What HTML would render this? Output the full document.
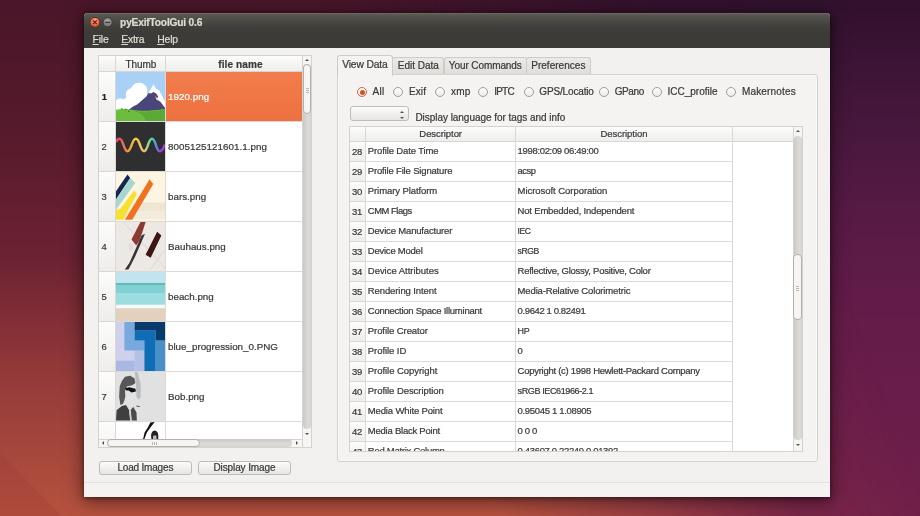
<!DOCTYPE html>
<html><head><meta charset="utf-8"><title>pyExifToolGui 0.6</title>
<style>
*{box-sizing:border-box;margin:0;padding:0}
html,body{width:920px;height:516px;overflow:hidden}
body{position:relative;font-family:"Liberation Sans",sans-serif;font-size:10px;color:#3a3a3a;background:#4a1a3a}
#root{position:absolute;left:0;top:0;width:920px;height:516px;will-change:transform}
.abs,.t{position:absolute}
.t{white-space:pre;line-height:12px;-webkit-text-stroke:.22px}
#bgc{position:absolute;left:0;top:0;width:920px;height:516px;background:linear-gradient(180deg,#31112d 0,#43163a 20%,#561a44 40%,#631c49 60%,#6a1d4a 80%,#701f49 100%)}
#bgw{position:absolute;left:0;top:0;width:920px;height:516px;background:linear-gradient(180deg,#4a1629 0,#561a2c 25%,#6c2232 50%,#963b3a 74%,#b5523e 100%);
 -webkit-mask-image:linear-gradient(70deg,#000 0,#000 45%,rgba(0,0,0,.6) 59%,rgba(0,0,0,.15) 72%,transparent 84%);mask-image:linear-gradient(70deg,#000 0,#000 45%,rgba(0,0,0,.6) 59%,rgba(0,0,0,.15) 72%,transparent 84%)}
#win{background:#f2f1f0;border-radius:4px 4px 0 0;box-shadow:0 3px 18px 1px rgba(0,0,0,.5),0 1px 4px rgba(0,0,0,.45)}
#title{border-radius:4px 4px 0 0;background:linear-gradient(#5c5a53 0,#4b4943 8px,#3f3e3a 15px,#3c3b37 20px,#3c3b37 100%);box-shadow:inset 0 1px 0 #6b6961}
.tbl{background:#fff;border:1px solid #d4d2ce;overflow:hidden}
.hd{background:linear-gradient(#fcfcfc,#eeeeec);border-right:1px solid #dad8d5;border-bottom:1px solid #d8d6d3}
.rn{background:linear-gradient(#fcfcfb,#eeedeb);border-right:1px solid #dad8d5;border-bottom:1px solid #dad8d5}
.cell{border-right:1px solid #dcdad7;border-bottom:1px solid #dcdad7;background:#fff}
.btn{border:1px solid #bfbcb7;border-radius:3px;background:linear-gradient(#fbfbfa,#e6e5e2)}
.tab{border:1px solid #cfccc8;border-bottom:none;border-radius:3px 3px 0 0;background:linear-gradient(#eceae7,#e0deda)}
.radio{border-radius:50%;border:1px solid #a09d97;background:linear-gradient(#fff,#ecebe8)}
.sb{background:#dbd9d5}
.th{background:#f6f5f4;border:1px solid #b3b1ac;border-radius:4px}
</style></head><body>
<div id="root"><div id="bgc"></div><div id="bgw"></div>
<svg class="abs" style="left:0;top:440px" width="80" height="76" viewBox="0 440 80 76"><path d="M0 453L62 516H0Z" fill="#9c3a36" fill-opacity=".28"/></svg>
<div class="abs" id="win" style="left:84px;top:13px;width:746px;height:484px"></div>
<div class="abs title" id="title" style="left:84.00px;top:13.00px;width:746.00px;height:35.00px;"></div>
<svg class="abs" style="left:86px;top:14px" width="32" height="18" viewBox="86 14 32 18">
<defs><radialGradient id="gc" cx=".5" cy=".3" r=".7"><stop offset="0" stop-color="#f8a58c"/><stop offset=".6" stop-color="#ef6d50"/><stop offset="1" stop-color="#e0553a"/></radialGradient>
<radialGradient id="gm" cx=".5" cy=".3" r=".7"><stop offset="0" stop-color="#a9a8a2"/><stop offset=".6" stop-color="#85847e"/><stop offset="1" stop-color="#74736d"/></radialGradient></defs>
<circle cx="94.9" cy="22.3" r="4.9" fill="url(#gc)" stroke="#5e2a1c" stroke-width="1"/>
<path d="M93 20.4L96.8 24.2M96.8 20.4L93 24.2" stroke="#5a2410" stroke-width="1.2"/>
<circle cx="107.6" cy="22.3" r="4.6" fill="url(#gm)" stroke="#3a3935" stroke-width="1"/>
<path d="M105.2 22.4H110" stroke="#3c3b37" stroke-width="1.3"/></svg>
<div class="t" style="left:120.10px;top:16.50px;font-size:10.2px;font-weight:700;color:#dfdbd2;letter-spacing:-0.187px;">pyExifToolGui 0.6</div>
<div class="t" style="left:92.50px;top:33.50px;font-size:10.4px;color:#dfdbd2;letter-spacing:-0.183px;"><u>F</u>ile</div>
<div class="t" style="left:121.20px;top:33.50px;font-size:10.4px;color:#dfdbd2;letter-spacing:-0.216px;"><u>E</u>xtra</div>
<div class="t" style="left:157.20px;top:33.50px;font-size:10.4px;color:#dfdbd2;letter-spacing:-0.158px;"><u>H</u>elp</div>
<div class="abs " style="left:84.00px;top:482.00px;width:746.00px;height:15.00px;background:#f4f3f2;border-top:1px solid #e3e1de"></div>
<div class="abs tbl" style="left:98px;top:55px;width:214px;height:393px">
<div class="abs hd" style="left:0.00px;top:0.00px;width:17.00px;height:16.00px;"></div>
<div class="abs hd" style="left:17.00px;top:0.00px;width:50.00px;height:16.00px;"></div>
<div class="abs hd" style="left:67.00px;top:0.00px;width:137.00px;height:16.00px;"></div>
<div class="t" style="left:26.40px;top:2.50px;font-size:10px;letter-spacing:-0.031px;">Thumb</div>
<div class="t" style="left:119.30px;top:2.50px;font-size:10px;font-weight:700;letter-spacing:0.105px;">file name</div>
<div class="abs rn" style="left:0.00px;top:16.00px;width:17.00px;height:50.00px;"></div>
<div class="t" style="left:2.70px;top:34.50px;font-size:9.4px;font-weight:700;color:#222;">1</div>
<div class="abs cell" style="left:17.00px;top:16.00px;width:50.00px;height:50.00px;"></div>
<div class="abs" style="left:17px;top:16px;width:49px;height:49px;overflow:hidden"><svg width="49" height="49" viewBox="0 0 50 50" preserveAspectRatio="none" style="display:block"><rect width="50" height="50" fill="#a9d1f6"/>
<ellipse cx="23.5" cy="19" rx="8.5" ry="8" fill="#fff"/><ellipse cx="16" cy="23" rx="6" ry="6.5" fill="#fff"/><ellipse cx="14" cy="31" rx="7" ry="6" fill="#fff"/><rect x="12" y="22" width="20" height="16" fill="#fff"/>
<ellipse cx="4.5" cy="32" rx="5.5" ry="5" fill="#fff"/><rect x="0" y="33" width="16" height="6" fill="#fff"/>
<path d="M29 28 L38.3 12.5 L41 17 L44 18.5 L50 30 L50 40 L29 40Z" fill="#fff"/>
<path d="M11 40 L17 35.5 L22 33 L28 27.5 L31 25 L33 21.5 L36 22 L38 20.5 L41 22 L43 25 L42 27 L45 30 L50 36.5 L50 42 L11 42Z" fill="#4a4679"/>
<path d="M40 24 L42 27 L44 26 L45 30 L43 29 L41 28Z" fill="#fff" opacity=".85"/>
<path d="M0 38.5 Q8 37 16 38.5 Q28 41 50 37.5 L50 50 L0 50Z" fill="#6cbc3d"/>
<path d="M18 39.5 Q32 42 50 38 L50 50 L30 50 Q30 43 18 39.5Z" fill="#5aab35"/>
<path d="M5 38 L6 36.5 L7 38Z M9 38.5 L10 37 L11 38.5Z M12 40.5 L13 39 L14 40.5Z" fill="#2f6b2a"/></svg></div>
<div class="abs cell" style="left:67.00px;top:16.00px;width:137.00px;height:50.00px;background:linear-gradient(#f27d4c,#ee7040);"></div>
<div class="t" style="left:69.00px;top:34.50px;font-size:9.8px;color:#fff;letter-spacing:0.046px;">1920.png</div>
<div class="abs rn" style="left:0.00px;top:66.00px;width:17.00px;height:50.00px;"></div>
<div class="t" style="left:2.40px;top:84.50px;font-size:9.4px;">2</div>
<div class="abs cell" style="left:17.00px;top:66.00px;width:50.00px;height:50.00px;"></div>
<div class="abs" style="left:17px;top:66px;width:49px;height:49px;overflow:hidden"><svg width="49" height="49" viewBox="0 0 50 50" preserveAspectRatio="none" style="display:block"><defs><linearGradient id="rb" gradientUnits="userSpaceOnUse" x1="0" x2="50" y1="0" y2="0">
<stop offset="0" stop-color="#e6455c"/><stop offset=".1" stop-color="#ea5a58"/><stop offset=".24" stop-color="#f09240"/><stop offset=".4" stop-color="#f2d23c"/><stop offset=".57" stop-color="#ecc070"/><stop offset=".66" stop-color="#9ad68a"/><stop offset=".75" stop-color="#45cdb0"/><stop offset=".84" stop-color="#6a7ad8"/><stop offset=".9" stop-color="#9442d2"/><stop offset="1" stop-color="#a040c8"/></linearGradient></defs>
<rect width="50" height="50" fill="#2f2e31"/>
<path d="M0 20.5 C1.5 17 2.5 17 3.5 17 C7.6 17 7.6 29.8 11.7 29.8 C16 29.8 16 17 20.3 17 C24.5 17 24.5 29.8 28.6 29.8 C32.7 29.8 32.7 17 36.8 17 C40.7 17 40.7 29.8 44.6 29.8 C47 29.8 48.5 27 50 23" fill="none" stroke="url(#rb)" stroke-width="2.5"/></svg></div>
<div class="abs cell" style="left:67.00px;top:66.00px;width:137.00px;height:50.00px;"></div>
<div class="t" style="left:69.00px;top:84.50px;font-size:9.8px;letter-spacing:0.046px;">8005125121601.1.png</div>
<div class="abs rn" style="left:0.00px;top:116.00px;width:17.00px;height:50.00px;"></div>
<div class="t" style="left:2.40px;top:134.50px;font-size:9.4px;">3</div>
<div class="abs cell" style="left:17.00px;top:116.00px;width:50.00px;height:50.00px;"></div>
<div class="abs" style="left:17px;top:116px;width:49px;height:49px;overflow:hidden"><svg width="49" height="49" viewBox="0 0 50 50" preserveAspectRatio="none" style="display:block"><rect width="50" height="50" fill="#fdf4e1"/><path d="M22 31 L50 31 L50 48 L4 48Z" fill="#eee6d3"/><rect x="14" y="40" width="36" height="8" fill="#f3ecdc"/>
<path d="M11.7 2.6 L14.5 6.2 L0 28 L0 19.6Z" fill="#14274e"/>
<path d="M14.5 6.2 L19.8 11 L0 38.5 L0 28Z" fill="#a9d5d0"/>
<path d="M18.8 18.5 L21.3 22.8 L7 48.8 L0 48.8 L0 38.5 L4 38Z" fill="#f8e12e"/>
<path d="M34.3 7.5 L38 12.2 L16.6 48.8 L9.2 48.8Z" fill="#f07220"/></svg></div>
<div class="abs cell" style="left:67.00px;top:116.00px;width:137.00px;height:50.00px;"></div>
<div class="t" style="left:69.00px;top:134.50px;font-size:9.8px;">bars.png</div>
<div class="abs rn" style="left:0.00px;top:166.00px;width:17.00px;height:50.00px;"></div>
<div class="t" style="left:2.40px;top:184.50px;font-size:9.4px;">4</div>
<div class="abs cell" style="left:17.00px;top:166.00px;width:50.00px;height:50.00px;"></div>
<div class="abs" style="left:17px;top:166px;width:49px;height:49px;overflow:hidden"><svg width="49" height="49" viewBox="0 0 50 50" preserveAspectRatio="none" style="display:block"><rect width="50" height="50" fill="#ece9e5"/>
<path d="M7.6 0 L47.7 44.6 L50 47 M50 28 L35 48.7" stroke="#d6cdc4" stroke-width="0.7" fill="none"/>
<path d="M25 0 L30.2 0 L27.1 9.7 L24 18.9 L20.6 24 L15.8 17.9 L21 7.6Z" fill="#8a3a30"/>
<path d="M12.3 23 L16.9 21 L17.9 28.2 L13.8 30.2Z" fill="#e8dcd8"/>
<path d="M26.1 13.8 L29.6 12.1 L20 34.3 L15.8 42.6 L12.7 48.5 L9 48.5 L13.8 41.5 L17.9 32.3Z" fill="#3a3236"/>
<path d="M42 10 L46.3 13.8 L35.4 36.4 L30.2 33.3Z" fill="#3d1512"/></svg></div>
<div class="abs cell" style="left:67.00px;top:166.00px;width:137.00px;height:50.00px;"></div>
<div class="t" style="left:69.00px;top:184.50px;font-size:9.8px;">Bauhaus.png</div>
<div class="abs rn" style="left:0.00px;top:216.00px;width:17.00px;height:50.00px;"></div>
<div class="t" style="left:2.40px;top:234.50px;font-size:9.4px;">5</div>
<div class="abs cell" style="left:17.00px;top:216.00px;width:50.00px;height:50.00px;"></div>
<div class="abs" style="left:17px;top:216px;width:49px;height:49px;overflow:hidden"><svg width="49" height="49" viewBox="0 0 50 50" preserveAspectRatio="none" style="display:block"><rect width="50" height="50" fill="#e3d0bd"/>
<rect width="50" height="11.5" fill="#c1e5ef"/><rect y="11.2" width="50" height="2.5" fill="#5fbaba"/><rect y="13.4" width="50" height="8.2" fill="#80d1d3"/>
<rect y="21.4" width="50" height="12.2" fill="#9edddf"/><rect y="33.4" width="50" height="3.6" fill="#f4fbfb"/></svg></div>
<div class="abs cell" style="left:67.00px;top:216.00px;width:137.00px;height:50.00px;"></div>
<div class="t" style="left:69.00px;top:234.50px;font-size:9.8px;">beach.png</div>
<div class="abs rn" style="left:0.00px;top:266.00px;width:17.00px;height:50.00px;"></div>
<div class="t" style="left:2.40px;top:284.50px;font-size:9.4px;">6</div>
<div class="abs cell" style="left:17.00px;top:266.00px;width:50.00px;height:50.00px;"></div>
<div class="abs" style="left:17px;top:266px;width:49px;height:49px;overflow:hidden"><svg width="49" height="49" viewBox="0 0 50 50" preserveAspectRatio="none" style="display:block"><rect width="50" height="50" fill="#cfd0ec"/>
<path d="M0 39.5 L19 39.5 L19 50 L0 50Z" fill="#a9b9e3"/><path d="M19 29 L29 29 L29 50 L19 50Z" fill="#b4c0e6"/>
<path d="M8.6 0 L19 0 L19 19 L29 19 L29 29 L8.6 29Z" fill="#78a8dc"/>
<path d="M19 8.6 L40.5 8.6 L40.5 50 L29 50 L29 19 L19 19Z" fill="#0f6db5"/>
<path d="M40.5 19 L50 19 L50 50 L40.5 50Z" fill="#4a90c8"/>
<path d="M19 0 L50 0 L50 19 L40.5 19 L40.5 8.6 L19 8.6Z" fill="#083a6b"/></svg></div>
<div class="abs cell" style="left:67.00px;top:266.00px;width:137.00px;height:50.00px;"></div>
<div class="t" style="left:69.00px;top:284.50px;font-size:9.8px;letter-spacing:-0.006px;">blue_progression_0.PNG</div>
<div class="abs rn" style="left:0.00px;top:316.00px;width:17.00px;height:50.00px;"></div>
<div class="t" style="left:2.40px;top:334.50px;font-size:9.4px;">7</div>
<div class="abs cell" style="left:17.00px;top:316.00px;width:50.00px;height:50.00px;"></div>
<div class="abs" style="left:17px;top:316px;width:49px;height:49px;overflow:hidden"><svg width="49" height="49" viewBox="0 0 50 50" preserveAspectRatio="none" style="display:block"><rect width="50" height="50" fill="#e1e1e1"/>
<path d="M6 9.2 L9.2 4.9 L14.5 3.8 L18.8 6.4 L19.8 11.3 L16.6 13.4 L11.3 14.5 L9.2 18.8 L9.5 25 L8.5 29 L7 32.6 L4.5 33.7 L3.2 25.2 L3.8 14.5Z" fill="#575757"/>
<path d="M9.2 16.6 L13.4 15.6 L19.8 17 L20.3 19.8 L15.6 20.9 L13 18.8 L10.2 19Z" fill="#111"/>
<path d="M19.2 0 L22 0 L25.2 12.4 L25.2 25.2 L23 28.4 L20.9 25.2 L20.3 12.4Z" fill="#b9bcc0"/>
<path d="M20.9 34.3 L24.5 35 L24.3 35.8 L20.9 35.2Z" fill="#444"/>
<path d="M0 49.5 L0.6 39 L6 34.8 L10.2 33.7 L13.4 39 L14.5 49.5Z" fill="#3f3f3f"/><path d="M14.5 39 L17.7 35.8 L20.9 41.2 L21.3 49.5 L16 49.5Z" fill="#4a4a4a"/><path d="M13.4 39 L15 37.5 L16 49.5 L14.5 49.5Z" fill="#d4d4d4"/></svg></div>
<div class="abs cell" style="left:67.00px;top:316.00px;width:137.00px;height:50.00px;"></div>
<div class="t" style="left:69.00px;top:334.50px;font-size:9.8px;">Bob.png</div>
<div class="abs rn" style="left:0.00px;top:366.00px;width:17.00px;height:50.00px;"></div>
<div class="t" style="left:2.40px;top:384.50px;font-size:9.4px;">8</div>
<div class="abs cell" style="left:17.00px;top:366.00px;width:50.00px;height:50.00px;"></div>
<div class="abs" style="left:17px;top:366px;width:49px;height:49px;overflow:hidden"><svg width="49" height="18" viewBox="0 0 50 18" preserveAspectRatio="none" style="display:block"><rect width="50" height="18" fill="#fff"/>
<path d="M35 .4 L39.5 0 L35.5 5 L31.5 10.5 L28.6 18 L27.4 18 L29.2 10.5 L32.6 5.2Z" fill="#111"/>
<path d="M35.8 13.5 Q36 9 39.5 8.6 Q43 9 43.2 14 L43 18 L36.2 18Z" fill="#222"/><path d="M37.8 14 Q39.5 12.6 41.3 14 L41.3 18 L37.8 18Z" fill="#bbb"/></svg></div>
<div class="abs cell" style="left:67.00px;top:366.00px;width:137.00px;height:50.00px;"></div>
<div class="abs " style="left:203.00px;top:0.00px;width:9.00px;height:391.00px;background:#f6f5f4;border-left:1px solid #d6d4d0"></div>
<div class="abs sb" style="left:204.00px;top:8.00px;width:8.00px;height:365.00px;border-radius:4px;background:linear-gradient(90deg,#cbc9c5,#dddbd8 60%,#d6d4d0);"></div>
<div class="abs th" style="left:203.80px;top:8.30px;width:8.20px;height:50.20px;"></div>
<div class="abs " style="left:206.50px;top:31.50px;width:3.00px;height:0.80px;background:#b9b7b2"></div>
<div class="abs " style="left:206.50px;top:33.50px;width:3.00px;height:0.80px;background:#b9b7b2"></div>
<div class="abs " style="left:206.50px;top:35.50px;width:3.00px;height:0.80px;background:#b9b7b2"></div>
<div class="abs" style="left:205.70px;top:2.80px;width:0;height:0;border-left:2.0px solid transparent;border-right:2.0px solid transparent;border-bottom:2.4px solid #505050"></div>
<div class="abs" style="left:205.70px;top:376.60px;width:0;height:0;border-left:2.0px solid transparent;border-right:2.0px solid transparent;border-top:2.4px solid #505050"></div>
<div class="abs " style="left:0.00px;top:382.60px;width:203.00px;height:8.40px;background:#f6f5f4;border-top:1px solid #d6d4d0"></div>
<div class="abs sb" style="left:8.00px;top:383.30px;width:185.00px;height:7.70px;border-radius:4px;background:linear-gradient(#cbc9c5,#dddbd8 60%,#d6d4d0);"></div>
<div class="abs th" style="left:8.00px;top:383.30px;width:93.00px;height:7.70px;"></div>
<div class="abs " style="left:52.50px;top:385.80px;width:0.80px;height:3.00px;background:#b9b7b2"></div>
<div class="abs " style="left:54.50px;top:385.80px;width:0.80px;height:3.00px;background:#b9b7b2"></div>
<div class="abs " style="left:56.50px;top:385.80px;width:0.80px;height:3.00px;background:#b9b7b2"></div>
<div class="abs" style="left:2.60px;top:385.20px;width:0;height:0;border-top:2.0px solid transparent;border-bottom:2.0px solid transparent;border-right:2.4px solid #505050"></div>
<div class="abs" style="left:197.40px;top:385.20px;width:0;height:0;border-top:2.0px solid transparent;border-bottom:2.0px solid transparent;border-left:2.4px solid #505050"></div>
</div>
<div class="abs btn" style="left:98.60px;top:461.30px;width:93.20px;height:13.50px;"></div>
<div class="t" style="left:117.40px;top:461.50px;font-size:10px;letter-spacing:-0.183px;">Load Images</div>
<div class="abs btn" style="left:197.50px;top:461.30px;width:93.90px;height:13.50px;"></div>
<div class="t" style="left:213.40px;top:461.50px;font-size:10px;letter-spacing:-0.097px;">Display Image</div>
<div class="abs " style="left:337.00px;top:74.00px;width:480.50px;height:387.50px;border:1px solid #d3d1cd;border-radius:0 3px 3px 3px;background:#f4f3f2;box-shadow:inset 0 0 0 1px #f9f8f7"></div>
<div class="abs tab" style="left:337.00px;top:54.60px;width:56.00px;height:21.40px;background:#f4f3f2"></div>
<div class="t" style="left:342.20px;top:58.50px;font-size:10.3px;letter-spacing:-0.144px;">View Data</div>
<div class="abs tab" style="left:392.40px;top:57.00px;width:52.00px;height:17.00px;"></div>
<div class="t" style="left:397.80px;top:59.50px;font-size:10px;letter-spacing:-0.018px;">Edit Data</div>
<div class="abs tab" style="left:443.80px;top:57.00px;width:82.80px;height:17.00px;"></div>
<div class="t" style="left:448.80px;top:59.50px;font-size:10px;letter-spacing:-0.094px;">Your Commands</div>
<div class="abs tab" style="left:526.00px;top:57.00px;width:64.50px;height:17.00px;"></div>
<div class="t" style="left:531.20px;top:59.50px;font-size:10px;letter-spacing:0.028px;">Preferences</div>
<div class="abs radio" style="left:357.00px;top:87.00px;width:10.00px;height:10.00px;border-color:#c8694a;background:linear-gradient(#fff,#f3e9e4)"><div class="abs" style="left:1.5px;top:1.5px;width:5px;height:5px;border-radius:50%;background:#dc4f26"></div></div>
<div class="t" style="left:372.60px;top:85.50px;font-size:10px;letter-spacing:0.237px;">All</div>
<div class="abs radio" style="left:393.00px;top:87.00px;width:10.00px;height:10.00px;"></div>
<div class="t" style="left:408.90px;top:85.50px;font-size:10px;letter-spacing:0.143px;">Exif</div>
<div class="abs radio" style="left:435.00px;top:87.00px;width:10.00px;height:10.00px;"></div>
<div class="t" style="left:450.90px;top:85.50px;font-size:10px;letter-spacing:0.247px;">xmp</div>
<div class="abs radio" style="left:478.00px;top:87.00px;width:10.00px;height:10.00px;"></div>
<div class="t" style="left:494.20px;top:85.50px;font-size:10px;letter-spacing:-0.760px;">IPTC</div>
<div class="abs radio" style="left:524.00px;top:87.00px;width:10.00px;height:10.00px;"></div>
<div class="t" style="left:539.30px;top:85.50px;font-size:10px;letter-spacing:-0.156px;">GPS/Locatio</div>
<div class="abs radio" style="left:599.00px;top:87.00px;width:10.00px;height:10.00px;"></div>
<div class="t" style="left:614.70px;top:85.50px;font-size:10px;letter-spacing:-0.385px;">GPano</div>
<div class="abs radio" style="left:652.00px;top:87.00px;width:10.00px;height:10.00px;"></div>
<div class="t" style="left:667.60px;top:85.50px;font-size:10px;letter-spacing:-0.013px;">ICC_profile</div>
<div class="abs radio" style="left:726.00px;top:87.00px;width:10.00px;height:10.00px;"></div>
<div class="t" style="left:741.90px;top:85.50px;font-size:10px;letter-spacing:0.172px;">Makernotes</div>
<div class="abs btn" style="left:349.50px;top:106.20px;width:59.00px;height:15.10px;"></div>
<div class="abs" style="left:400.20px;top:110.90px;width:0;height:0;border-left:2.2px solid transparent;border-right:2.2px solid transparent;border-bottom:2.6px solid #505050"></div>
<div class="abs" style="left:400.20px;top:116.70px;width:0;height:0;border-left:2.2px solid transparent;border-right:2.2px solid transparent;border-top:2.6px solid #505050"></div>
<div class="t" style="left:415.40px;top:111.50px;font-size:10px;letter-spacing:-0.040px;">Display language for tags and info</div>
<div class="abs tbl" style="left:349px;top:125.5px;width:454px;height:326.5px">
<div class="abs hd" style="left:0.00px;top:0.00px;width:16.00px;height:15.50px;"></div>
<div class="abs hd" style="left:16.00px;top:0.00px;width:150.00px;height:15.50px;"></div>
<div class="abs hd" style="left:166.00px;top:0.00px;width:216.50px;height:15.50px;"></div>
<div class="abs hd" style="left:382.50px;top:0.00px;width:61.50px;height:15.50px;border-right:none"></div>
<div class="t" style="left:69.35px;top:1.00px;font-size:9.5px;letter-spacing:-0.066px;">Descriptor</div>
<div class="t" style="left:250.55px;top:1.00px;font-size:9.5px;letter-spacing:-0.063px;">Description</div>
<div class="abs rn" style="left:0.00px;top:15.50px;width:16.00px;height:20.00px;"></div>
<div class="abs cell" style="left:16.00px;top:15.50px;width:150.00px;height:20.00px;"></div>
<div class="abs cell" style="left:166.00px;top:15.50px;width:216.50px;height:20.00px;"></div>
<div class="t" style="left:2.00px;top:19.00px;font-size:9.5px;letter-spacing:-0.378px;">28</div>
<div class="t" style="left:17.80px;top:18.00px;font-size:9.5px;letter-spacing:-0.130px;">Profile Date Time</div>
<div class="t" style="left:167.60px;top:18.00px;font-size:9.5px;letter-spacing:-0.337px;">1998:02:09 06:49:00</div>
<div class="abs rn" style="left:0.00px;top:35.50px;width:16.00px;height:20.00px;"></div>
<div class="abs cell" style="left:16.00px;top:35.50px;width:150.00px;height:20.00px;"></div>
<div class="abs cell" style="left:166.00px;top:35.50px;width:216.50px;height:20.00px;"></div>
<div class="t" style="left:2.00px;top:39.00px;font-size:9.5px;letter-spacing:-0.378px;">29</div>
<div class="t" style="left:17.80px;top:38.00px;font-size:9.5px;letter-spacing:-0.166px;">Profile File Signature</div>
<div class="t" style="left:167.60px;top:38.00px;font-size:9.4px;letter-spacing:-0.437px;">acsp</div>
<div class="abs rn" style="left:0.00px;top:55.50px;width:16.00px;height:20.00px;"></div>
<div class="abs cell" style="left:16.00px;top:55.50px;width:150.00px;height:20.00px;"></div>
<div class="abs cell" style="left:166.00px;top:55.50px;width:216.50px;height:20.00px;"></div>
<div class="t" style="left:2.00px;top:59.00px;font-size:9.5px;letter-spacing:-0.378px;">30</div>
<div class="t" style="left:17.80px;top:58.00px;font-size:9.5px;letter-spacing:-0.089px;">Primary Platform</div>
<div class="t" style="left:167.60px;top:58.00px;font-size:9.5px;letter-spacing:-0.051px;">Microsoft Corporation</div>
<div class="abs rn" style="left:0.00px;top:75.50px;width:16.00px;height:20.00px;"></div>
<div class="abs cell" style="left:16.00px;top:75.50px;width:150.00px;height:20.00px;"></div>
<div class="abs cell" style="left:166.00px;top:75.50px;width:216.50px;height:20.00px;"></div>
<div class="t" style="left:2.00px;top:79.00px;font-size:9.5px;letter-spacing:-0.378px;">31</div>
<div class="t" style="left:17.80px;top:78.00px;font-size:9.4px;letter-spacing:-0.440px;">CMM Flags</div>
<div class="t" style="left:167.60px;top:78.00px;font-size:9.5px;letter-spacing:-0.195px;">Not Embedded, Independent</div>
<div class="abs rn" style="left:0.00px;top:95.50px;width:16.00px;height:20.00px;"></div>
<div class="abs cell" style="left:16.00px;top:95.50px;width:150.00px;height:20.00px;"></div>
<div class="abs cell" style="left:166.00px;top:95.50px;width:216.50px;height:20.00px;"></div>
<div class="t" style="left:2.00px;top:99.00px;font-size:9.5px;letter-spacing:-0.378px;">32</div>
<div class="t" style="left:17.80px;top:98.00px;font-size:9.5px;letter-spacing:-0.170px;">Device Manufacturer</div>
<div class="t" style="left:167.60px;top:98.50px;font-size:8.5px;letter-spacing:-0.436px;">IEC</div>
<div class="abs rn" style="left:0.00px;top:115.50px;width:16.00px;height:20.00px;"></div>
<div class="abs cell" style="left:16.00px;top:115.50px;width:150.00px;height:20.00px;"></div>
<div class="abs cell" style="left:166.00px;top:115.50px;width:216.50px;height:20.00px;"></div>
<div class="t" style="left:2.00px;top:119.00px;font-size:9.5px;letter-spacing:-0.378px;">33</div>
<div class="t" style="left:17.80px;top:118.00px;font-size:9.5px;letter-spacing:-0.233px;">Device Model</div>
<div class="t" style="left:167.60px;top:118.50px;font-size:8.6px;letter-spacing:-0.441px;">sRGB</div>
<div class="abs rn" style="left:0.00px;top:135.50px;width:16.00px;height:20.00px;"></div>
<div class="abs cell" style="left:16.00px;top:135.50px;width:150.00px;height:20.00px;"></div>
<div class="abs cell" style="left:166.00px;top:135.50px;width:216.50px;height:20.00px;"></div>
<div class="t" style="left:2.00px;top:139.00px;font-size:9.5px;letter-spacing:-0.378px;">34</div>
<div class="t" style="left:17.80px;top:138.00px;font-size:9.5px;letter-spacing:-0.025px;">Device Attributes</div>
<div class="t" style="left:167.60px;top:138.00px;font-size:9.5px;letter-spacing:-0.254px;">Reflective, Glossy, Positive, Color</div>
<div class="abs rn" style="left:0.00px;top:155.50px;width:16.00px;height:20.00px;"></div>
<div class="abs cell" style="left:16.00px;top:155.50px;width:150.00px;height:20.00px;"></div>
<div class="abs cell" style="left:166.00px;top:155.50px;width:216.50px;height:20.00px;"></div>
<div class="t" style="left:2.00px;top:159.00px;font-size:9.5px;letter-spacing:-0.378px;">35</div>
<div class="t" style="left:17.80px;top:158.00px;font-size:9.5px;letter-spacing:-0.097px;">Rendering Intent</div>
<div class="t" style="left:167.60px;top:158.00px;font-size:9.5px;letter-spacing:-0.149px;">Media-Relative Colorimetric</div>
<div class="abs rn" style="left:0.00px;top:175.50px;width:16.00px;height:20.00px;"></div>
<div class="abs cell" style="left:16.00px;top:175.50px;width:150.00px;height:20.00px;"></div>
<div class="abs cell" style="left:166.00px;top:175.50px;width:216.50px;height:20.00px;"></div>
<div class="t" style="left:2.00px;top:179.00px;font-size:9.5px;letter-spacing:-0.378px;">36</div>
<div class="t" style="left:17.80px;top:178.00px;font-size:9.5px;letter-spacing:-0.255px;">Connection Space Illuminant</div>
<div class="t" style="left:167.60px;top:178.00px;font-size:9.5px;letter-spacing:-0.391px;">0.9642 1 0.82491</div>
<div class="abs rn" style="left:0.00px;top:195.50px;width:16.00px;height:20.00px;"></div>
<div class="abs cell" style="left:16.00px;top:195.50px;width:150.00px;height:20.00px;"></div>
<div class="abs cell" style="left:166.00px;top:195.50px;width:216.50px;height:20.00px;"></div>
<div class="t" style="left:2.00px;top:199.00px;font-size:9.5px;letter-spacing:-0.378px;">37</div>
<div class="t" style="left:17.80px;top:198.00px;font-size:9.5px;letter-spacing:-0.075px;">Profile Creator</div>
<div class="t" style="left:167.60px;top:198.50px;font-size:8.9px;letter-spacing:-0.344px;">HP</div>
<div class="abs rn" style="left:0.00px;top:215.50px;width:16.00px;height:20.00px;"></div>
<div class="abs cell" style="left:16.00px;top:215.50px;width:150.00px;height:20.00px;"></div>
<div class="abs cell" style="left:166.00px;top:215.50px;width:216.50px;height:20.00px;"></div>
<div class="t" style="left:2.00px;top:219.00px;font-size:9.5px;letter-spacing:-0.378px;">38</div>
<div class="t" style="left:17.80px;top:218.00px;font-size:9.5px;letter-spacing:-0.064px;">Profile ID</div>
<div class="t" style="left:167.60px;top:218.00px;font-size:9.5px;">0</div>
<div class="abs rn" style="left:0.00px;top:235.50px;width:16.00px;height:20.00px;"></div>
<div class="abs cell" style="left:16.00px;top:235.50px;width:150.00px;height:20.00px;"></div>
<div class="abs cell" style="left:166.00px;top:235.50px;width:216.50px;height:20.00px;"></div>
<div class="t" style="left:2.00px;top:239.00px;font-size:9.5px;letter-spacing:-0.378px;">39</div>
<div class="t" style="left:17.80px;top:238.00px;font-size:9.5px;letter-spacing:-0.046px;">Profile Copyright</div>
<div class="t" style="left:167.60px;top:238.00px;font-size:9.5px;letter-spacing:-0.275px;">Copyright (c) 1998 Hewlett-Packard Company</div>
<div class="abs rn" style="left:0.00px;top:255.50px;width:16.00px;height:20.00px;"></div>
<div class="abs cell" style="left:16.00px;top:255.50px;width:150.00px;height:20.00px;"></div>
<div class="abs cell" style="left:166.00px;top:255.50px;width:216.50px;height:20.00px;"></div>
<div class="t" style="left:2.00px;top:259.00px;font-size:9.5px;letter-spacing:-0.378px;">40</div>
<div class="t" style="left:17.80px;top:258.00px;font-size:9.5px;letter-spacing:-0.061px;">Profile Description</div>
<div class="t" style="left:167.60px;top:258.50px;font-size:9.1px;letter-spacing:-0.438px;">sRGB IEC61966-2.1</div>
<div class="abs rn" style="left:0.00px;top:275.50px;width:16.00px;height:20.00px;"></div>
<div class="abs cell" style="left:16.00px;top:275.50px;width:150.00px;height:20.00px;"></div>
<div class="abs cell" style="left:166.00px;top:275.50px;width:216.50px;height:20.00px;"></div>
<div class="t" style="left:2.00px;top:279.00px;font-size:9.5px;letter-spacing:-0.378px;">41</div>
<div class="t" style="left:17.80px;top:278.00px;font-size:9.5px;letter-spacing:-0.143px;">Media White Point</div>
<div class="t" style="left:167.60px;top:278.00px;font-size:9.5px;letter-spacing:-0.328px;">0.95045 1 1.08905</div>
<div class="abs rn" style="left:0.00px;top:295.50px;width:16.00px;height:20.00px;"></div>
<div class="abs cell" style="left:16.00px;top:295.50px;width:150.00px;height:20.00px;"></div>
<div class="abs cell" style="left:166.00px;top:295.50px;width:216.50px;height:20.00px;"></div>
<div class="t" style="left:2.00px;top:299.00px;font-size:9.5px;letter-spacing:-0.378px;">42</div>
<div class="t" style="left:17.80px;top:298.00px;font-size:9.5px;letter-spacing:-0.234px;">Media Black Point</div>
<div class="t" style="left:167.60px;top:298.00px;font-size:9.5px;letter-spacing:-0.335px;">0 0 0</div>
<div class="abs rn" style="left:0.00px;top:315.50px;width:16.00px;height:20.00px;"></div>
<div class="abs cell" style="left:16.00px;top:315.50px;width:150.00px;height:20.00px;"></div>
<div class="abs cell" style="left:166.00px;top:315.50px;width:216.50px;height:20.00px;"></div>
<div class="t" style="left:2.00px;top:319.00px;font-size:9.5px;letter-spacing:-0.378px;">43</div>
<div class="t" style="left:17.80px;top:318.00px;font-size:9.5px;letter-spacing:-0.263px;">Red Matrix Column</div>
<div class="t" style="left:167.60px;top:318.00px;font-size:9.5px;letter-spacing:-0.346px;">0.43607 0.22249 0.01392</div>
<div class="abs " style="left:442.50px;top:0.00px;width:9.50px;height:324.50px;background:#f6f5f4;border-left:1px solid #d6d4d0"></div>
<div class="abs sb" style="left:443.50px;top:9.50px;width:8.50px;height:304.00px;border-radius:4px;background:linear-gradient(90deg,#cbc9c5,#dddbd8 60%,#d6d4d0);"></div>
<div class="abs th" style="left:443.30px;top:127.80px;width:8.70px;height:65.70px;"></div>
<div class="abs " style="left:446.20px;top:159.00px;width:3.00px;height:0.80px;background:#b9b7b2"></div>
<div class="abs " style="left:446.20px;top:161.00px;width:3.00px;height:0.80px;background:#b9b7b2"></div>
<div class="abs " style="left:446.20px;top:163.00px;width:3.00px;height:0.80px;background:#b9b7b2"></div>
<div class="abs" style="left:445.60px;top:3.80px;width:0;height:0;border-left:2.0px solid transparent;border-right:2.0px solid transparent;border-bottom:2.4px solid #505050"></div>
<div class="abs" style="left:445.60px;top:317.80px;width:0;height:0;border-left:2.0px solid transparent;border-right:2.0px solid transparent;border-top:2.4px solid #505050"></div>
</div>
</div></body></html>
